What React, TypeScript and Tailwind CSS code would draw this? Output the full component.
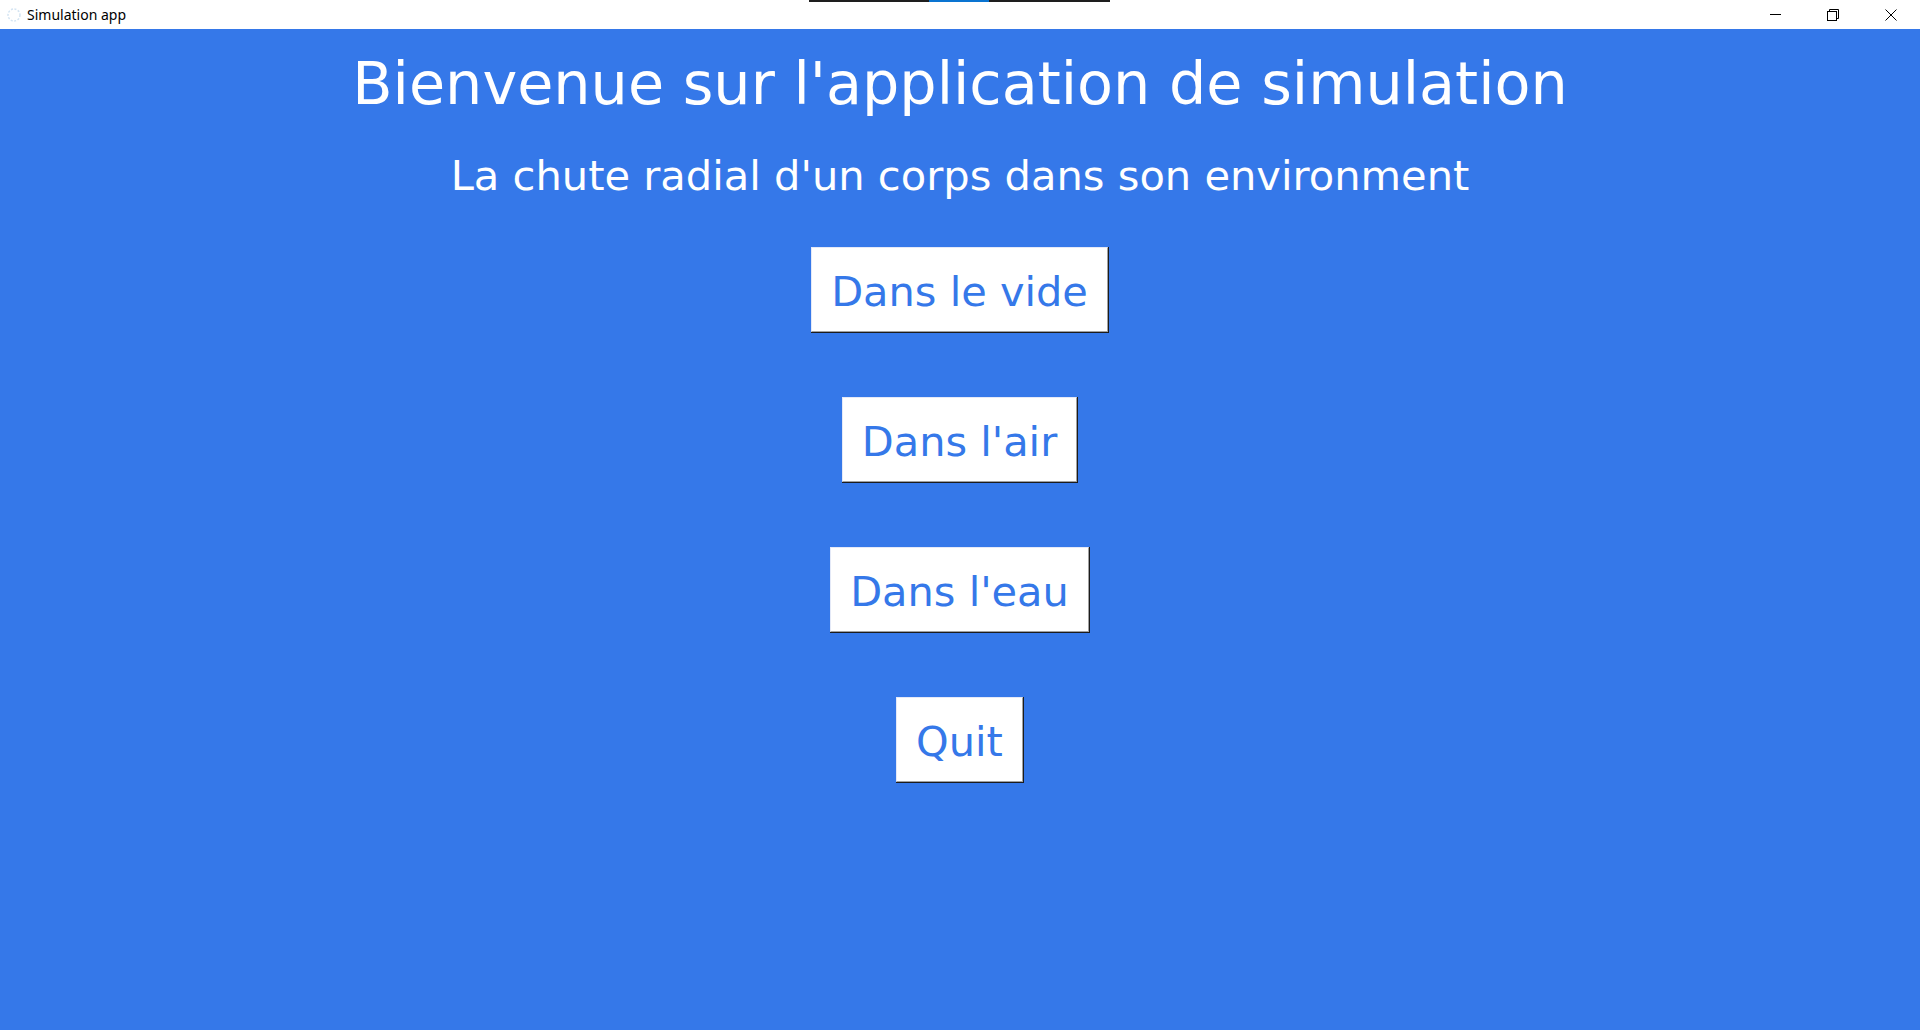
import React from 'react';

const FONT = { fontFamily: '"DejaVu Sans", Verdana, sans-serif' };

const BUTTONS = ['Dans le vide', "Dans l'air", "Dans l'eau", 'Quit'];

function TitleBar() {
  return (
    <div className="relative h-[29px] bg-white flex items-center shrink-0">
      {/* faint window icon */}
      <svg className="ml-[6px] w-4 h-4" viewBox="0 0 16 16">
        <circle cx="8" cy="8" r="6" fill="none" stroke="#d4e4f2" strokeWidth="1.5" strokeDasharray="2 1.5" />
      </svg>
      <span className="ml-[5px] text-[14px] text-black" style={{ fontFamily: '"Noto Sans", "Liberation Sans", sans-serif' }}>
        Simulation app
      </span>

      {/* recording strip at top centre */}
      <div className="absolute top-0 left-[809px] w-[301px] h-[2px] bg-[#1e1e1e] flex">
        <div className="ml-[120px] w-[60px] h-full bg-[#0a74d1]" />
      </div>

      <div className="ml-auto flex h-full">
        <div className="w-[58px] flex items-center justify-center">
          <div className="w-[11px] h-px bg-black" />
        </div>
        <div className="w-[58px] flex items-center justify-center">
          <svg width="12" height="12" viewBox="0 0 12 12" fill="none" stroke="black" strokeWidth="1">
            <rect x="0.5" y="2.5" width="9" height="9" />
            <path d="M2.5 2.5V0.5h9v9h-2" />
          </svg>
        </div>
        <div className="w-[58px] flex items-center justify-center">
          <svg width="12" height="12" viewBox="0 0 12 12" stroke="black" strokeWidth="1">
            <path d="M0.5 0.5l11 11M11.5 0.5l-11 11" />
          </svg>
        </div>
      </div>
    </div>
  );
}

function TkButton({ label }: { label: string }) {
  return (
    <div className="border-r border-b border-[#1c1c1c]">
      <div className="bg-white border-t border-l border-[#e4e9f7] border-r border-b border-r-[#a0a0a0] border-b-[#a0a0a0] h-[85px] px-[19px] pt-[23px]">
        <span className="block text-[41.5px] leading-[42px] text-[#3578e9] whitespace-nowrap" style={FONT}>
          {label}
        </span>
      </div>
    </div>
  );
}

export default function App() {
  return (
    <div className="w-[1920px] h-[1030px] flex flex-col overflow-hidden bg-[#3578e9]">
      <TitleBar />
      <div className="flex-1 flex flex-col items-center" style={FONT}>
        <h1 className="mt-[25px] text-[58.8px] leading-[59px] text-white font-normal">
          Bienvenue sur l'application de simulation
        </h1>
        <h2 className="mt-[42px] text-[41.6px] leading-[42px] text-white font-normal">
          La chute radial d'un corps dans son environment
        </h2>
        <div className="mt-[50px] flex flex-col items-center gap-[64px]">
          {BUTTONS.map((b) => (
            <TkButton key={b} label={b} />
          ))}
        </div>
      </div>
    </div>
  );
}
